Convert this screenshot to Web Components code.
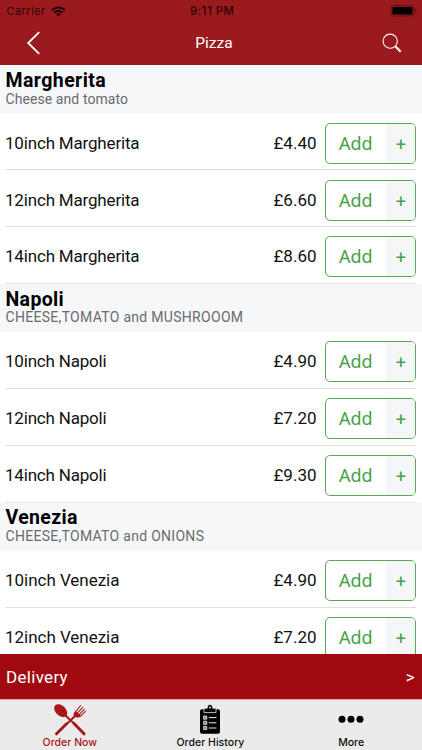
<!DOCTYPE html>
<html lang="en">
<head>
<meta charset="utf-8">
<meta name="viewport" content="width=device-width, initial-scale=1">
<title>Pizza</title>
<style>
    html, body {
        margin: 0;
        height: 100%;
        overflow: hidden;
        background: #fff;
        font-family: Roboto, "Liberation Sans", sans-serif;
    }
</style>
</head>
<body>
<menu-screen>
    <status-bar slot="top" carrier="Carrier" time="9:11 PM"></status-bar>
    <nav-header slot="top">Pizza</nav-header>

    <menu-section name="Margherita" info="Cheese and tomato" style="--name-space: .42px; --info-space: .08px; --item-space: -.18px">
        <menu-item price="£4.40">10inch Margherita</menu-item>
        <menu-item price="£6.60">12inch Margherita</menu-item>
        <menu-item price="£8.60">14inch Margherita</menu-item>
    </menu-section>
    <menu-section name="Napoli" info="CHEESE,TOMATO and MUSHROOOM" style="--info-space: .3px; --item-space: -.2px">
        <menu-item price="£4.90">10inch Napoli</menu-item>
        <menu-item price="£7.20">12inch Napoli</menu-item>
        <menu-item price="£9.30">14inch Napoli</menu-item>
    </menu-section>
    <menu-section name="Venezia" info="CHEESE,TOMATO and ONIONS" style="--info-space: .29px; --item-space: -.03px">
        <menu-item price="£4.90">10inch Venezia</menu-item>
        <menu-item price="£7.20">12inch Venezia</menu-item>
    </menu-section>

    <delivery-bar slot="bottom">Delivery</delivery-bar>
    <tab-bar slot="bottom">
        <tab-item icon="cutlery" active>Order Now</tab-item>
        <tab-item icon="clipboard">Order History</tab-item>
        <tab-item icon="dots">More</tab-item>
    </tab-bar>
</menu-screen>

<script>
    // Attaches an open shadow root filled with the given markup
    function render(host, html) {
        const template = document.createElement('template');
        template.innerHTML = html;
        host.attachShadow({mode: 'open'}).appendChild(template.content.cloneNode(true));
        return host.shadowRoot;
    }

    class MenuScreen extends HTMLElement {
        constructor() {
            super();
            render(this, `
            <style>
                :host { display: flex; flex-direction: column; height: 100vh; }
                header { background: #9a1a1e; height: 65.4px; flex: none; }
                main { flex: 1; min-height: 0; overflow: hidden; }
                footer { flex: none; }
            </style>
            <header><slot name="top"></slot></header>
            <main><slot></slot></main>
            <footer><slot name="bottom"></slot></footer>
            `);
        }
    }

    class StatusBar extends HTMLElement {
        constructor() {
            super();
            const root = render(this, `
            <style>
                :host {
                    display: grid;
                    grid-template-columns: 1fr auto 1fr;
                    align-items: center;
                    height: 22px;
                    padding: 0 5px 0 6.5px;
                    font: 11px Inter, sans-serif;
                    color: #2b0506;
                }
                .left { display: flex; align-items: center; gap: 5.5px; letter-spacing: .45px; }
                #time { font-weight: 500; font-size: 11.5px; letter-spacing: .5px; transform: translateX(.5px); }
                .battery { justify-self: end; }
                svg { display: block; }
            </style>
            <div class="left">
                <span id="carrier"></span>
                <svg width="15" height="11" viewBox="0 0 15 11" fill="none" stroke="#1d0304" stroke-width="2">
                    <path d="M1 4.1a9.2 9.2 0 0 1 13 0M3.4 6.6a5.8 5.8 0 0 1 8.2 0"/>
                    <path d="M7.5 10.6 5.2 8.3a3.3 3.3 0 0 1 4.6 0Z" fill="#1d0304" stroke="none"/>
                </svg>
            </div>
            <span id="time"></span>
            <svg class="battery" width="27" height="12" viewBox="0 0 27 12">
                <rect x=".9" y=".6" width="23" height="10.4" rx="2.6" fill="none" stroke="#5c0e11"/>
                <rect x="2.4" y="2.1" width="20" height="7.4" rx="1.3"/>
                <path d="M25.2 4v3.6q1.3-.5 1.3-1.8T25.2 4Z" fill="#5c0e11"/>
            </svg>
            `);
            root.querySelector('#carrier').textContent = this.getAttribute('carrier');
            root.querySelector('#time').textContent = this.getAttribute('time');
        }
    }

    class NavHeader extends HTMLElement {
        constructor() {
            super();
            render(this, `
            <style>
                :host {
                    display: grid;
                    grid-template-columns: 1fr auto 1fr;
                    align-items: center;
                    height: 42px;
                    padding: 0 20px 0 26px;
                    color: #fff;
                    font-size: 15.5px;
                }
                .search { justify-self: end; }
                svg { display: block; fill: none; stroke: #fff; }
            </style>
            <svg width="15" height="24" viewBox="0 0 15 24" stroke-width="1.8"><path d="M13.2 1.2 2.2 12l11 10.8"/></svg>
            <span><slot></slot></span>
            <svg class="search" width="20" height="20" viewBox="0 0 20 20">
                <circle cx="8.2" cy="8.2" r="7.1" stroke-width="1.1"/>
                <path d="m13.2 13.2 1.4 1.4" stroke-width="1.1"/>
                <path d="m13.8 13.8 4.9 4.9" stroke-width="2.1"/>
            </svg>
            `);
        }
    }

    class MenuSection extends HTMLElement {
        constructor() {
            super();
            const root = render(this, `
            <style>
                :host { display: block; }
                .head {
                    box-sizing: border-box;
                    height: 48.1px;
                    padding: 3.4px 6px 0 5.5px;
                    background: #f6f7f9;
                }
                h2 { margin: 0; font-size: 19.5px; line-height: 23px; font-weight: 700; letter-spacing: var(--name-space, .35px); color: #000; }
                p { margin: -1.2px 0 0; font-size: 14px; line-height: 16px; letter-spacing: var(--info-space, 0); color: #6b6b6d; }
            </style>
            <div class="head"><h2></h2><p></p></div>
            <slot></slot>
            `);
            root.querySelector('h2').textContent = this.getAttribute('name');
            root.querySelector('p').textContent = this.getAttribute('info');
        }
    }

    class MenuItem extends HTMLElement {
        constructor() {
            super();
            const root = render(this, `
            <style>
                :host {
                    box-sizing: border-box;
                    display: flex;
                    align-items: center;
                    height: 56.9px;
                    margin-left: 5px;
                    margin-right: 6px;
                    padding-top: 3.4px;
                    border-bottom: 1px solid #dfdfe1;
                    font-size: 17px;
                    color: #111;
                }
                :host(:last-child) { border-bottom-color: #e6e6e8; }
                .name { flex: 1; padding-bottom: 1px; letter-spacing: var(--item-space, 0); }
                #price { margin-right: 8.5px; padding-bottom: 1px; }
            </style>
            <span class="name"><slot></slot></span>
            <span id="price"></span>
            <add-button></add-button>
            `);
            root.querySelector('#price').textContent = this.getAttribute('price');
        }
    }

    class AddButton extends HTMLElement {
        constructor() {
            super();
            render(this, `
            <style>
                :host {
                    box-sizing: border-box;
                    display: flex;
                    width: 91px;
                    height: 41px;
                    border: 1.4px solid #55a855;
                    border-radius: 5px;
                    overflow: hidden;
                    color: #45a247;
                    background: #fff;
                }
                span { display: flex; align-items: center; justify-content: center; box-sizing: border-box; }
                .label { flex: 1; font-family: "Noto Sans", sans-serif; font-size: 18px; padding-bottom: 1px; }
                .plus { width: 29.5px; background: #f5f6f8; font-size: 18px; padding-top: 2px; padding-left: 1px; }
            </style>
            <span class="label">Add</span>
            <span class="plus">+</span>
            `);
        }
    }

    class DeliveryBar extends HTMLElement {
        constructor() {
            super();
            render(this, `
            <style>
                :host {
                    display: flex;
                    align-items: center;
                    justify-content: space-between;
                    height: 45px;
                    padding: 0 7px 0 6px;
                    background: #a00a0f;
                    color: #fff;
                    font-size: 17px;
                    letter-spacing: .3px;
                }
            </style>
            <span><slot></slot></span><span>&gt;</span>
            `);
        }
    }

    class TabBar extends HTMLElement {
        constructor() {
            super();
            render(this, `
            <style>
                :host {
                    box-sizing: border-box;
                    display: grid;
                    grid-template-columns: repeat(3, 1fr);
                    height: 51px;
                    background: #ebebeb;
                    border-top: 1px solid #dba9aa;
                }
            </style>
            <slot></slot>
            `);
        }
    }

    class TabItem extends HTMLElement {
        static icons = {
            cutlery: `
                <svg width="34" height="32" viewBox="0 0 34 32" fill="currentColor" stroke="currentColor" stroke-linecap="round">
                    <ellipse cx="7.7" cy="6.6" rx="7.6" ry="5.1" transform="rotate(44 7.7 6.6)" stroke="none"/>
                    <path d="m12 11 9 8.500" stroke-width="1.900"/>
                    <path d="m21 19.500 10 10.300" stroke-width="3"/>
                    <path d="m22.500 11.500-9 8.700" stroke-width="1.900"/>
                    <path d="m13.500 19.800-10 10" stroke-width="3"/>
                    <path d="M21 12.800c-.9-2.300-.2-4.400 1.400-6.100l5.800 5.400c-2 1.700-4.700 2-7.200.7Z" stroke="none"/>
                    <path d="m22.900 7.300 4.700-5.800m-3 7.400 5.100-5.500m-3.400 7 5.200-5.200m-3.700 6.700 4.600-4.600" stroke-width="1.050"/>
                </svg>`,
            clipboard: `
                <svg width="22" height="32" viewBox="0 0 22 32">
                    <path d="M3 5.200h16a2 2 0 0 1 2 2v20.600a2 2 0 0 1-2 2H3a2 2 0 0 1-2-2V7.200a2 2 0 0 1 2-2Z"/>
                    <path d="M5 4.200h3.200C8.200 2 9.300.5 11 .5S13.800 2 13.800 4.200H17v4.400H5Z" stroke="#ebebeb" stroke-width=".8"/>
                    <circle cx="11" cy="3.500" r="1" fill="#ebebeb"/>
                    <path d="M4.600 12h3.200v3.200H4.600Zm0 5.200h3.200v3.200H4.600Zm0 5.200h3.200v3.200H4.600Z" fill="#888" stroke="#ebebeb" stroke-width=".8"/>
                    <path d="M9.800 13.600h7.600M9.800 18.800h7.600M9.800 24h7.600" stroke="#ebebeb" stroke-width="1"/>
                </svg>`,
            dots: `
                <svg width="26" height="32" viewBox="0 0 26 32">
                    <circle cx="4" cy="15.300" r="3.500"/><circle cx="13" cy="15.300" r="3.500"/><circle cx="22" cy="15.300" r="3.500"/>
                </svg>`
        };

        constructor() {
            super();
            render(this, `
            <style>
                :host {
                    display: flex;
                    flex-direction: column;
                    align-items: center;
                    padding: 4px 1px 0 0;
                    font: 500 10.5px/14px Inter, sans-serif;
                    letter-spacing: .02px;
                    color: #111;
                }
                :host([active]) { color: #a9161b; }
                svg { display: block; flex: none; }
            </style>
            ${TabItem.icons[this.getAttribute('icon')]}
            <span><slot></slot></span>
            `);
        }
    }

    customElements.define('menu-screen', MenuScreen);
    customElements.define('status-bar', StatusBar);
    customElements.define('nav-header', NavHeader);
    customElements.define('menu-section', MenuSection);
    customElements.define('add-button', AddButton);
    customElements.define('menu-item', MenuItem);
    customElements.define('delivery-bar', DeliveryBar);
    customElements.define('tab-bar', TabBar);
    customElements.define('tab-item', TabItem);
</script>
</body>
</html>
